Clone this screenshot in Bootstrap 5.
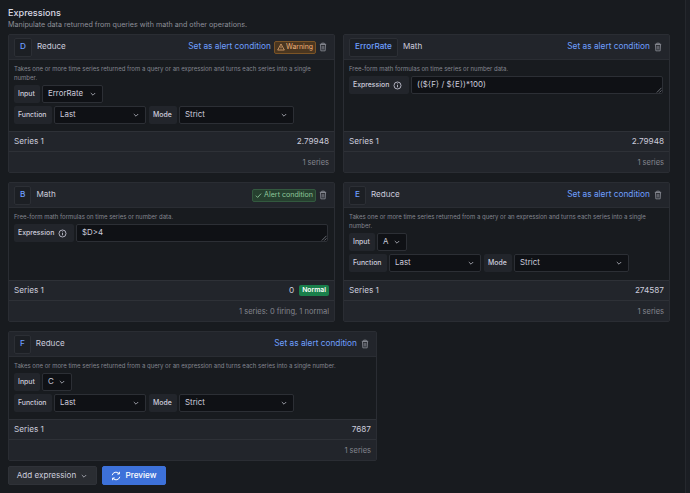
<!DOCTYPE html>
<html lang="en">
<head>
<meta charset="utf-8">
<title>Expressions</title>
<link href="https://cdn.jsdelivr.net/npm/bootstrap@5.3.0/dist/css/bootstrap.min.css" rel="stylesheet">
<style>
html,body{height:100%;overflow:hidden}
body{background:#181b1f;color:#ccccdc;font-family:Inter,"Noto Sans",sans-serif;font-size:8px;line-height:1.2;-webkit-font-smoothing:antialiased}
.shell{height:493px}
.pane{width:685px;padding:7px 0 0 8px}
.rail{width:5px;border-left:1px solid #25282d;background:#1b1e23}
.ttl{font-size:9.1px;font-weight:500;color:#d8d9e4;line-height:12px;margin:0}
.subttl{font-size:7.15px;color:#8e9099;line-height:9px;margin:1px 0 5px}
.grid-exp{display:flex;flex-wrap:wrap;column-gap:8px;row-gap:9px}
.ex{display:flex;flex-direction:column;background:#181b1f;border:1px solid #2a2d33;border-radius:2px}
.w-a{width:327px}.w-b{width:327px}.w-c{width:369px}
.h-a{height:139px}.h-b{height:140px}.h-c{height:130px}
.ex-head{height:25px;flex:none;background:#22252b;border-bottom:1px solid #2a2d33;padding:0 7px 0 5px}
.refid{height:19px;min-width:16px;padding:0 5px;border:1px solid #2c2f35;background:#1c1f24;color:#6e9fff;font-weight:500;font-size:8.2px;border-radius:2px}
.kind{font-size:8.1px;color:#ccccdc;margin-left:5px}
.setlink{font-size:8.3px;color:#6e9fff;white-space:nowrap}
.tag{height:13px;padding:0 2px;border-radius:2px;font-size:6.9px;white-space:nowrap;margin-left:3px;margin-right:3px;gap:1px}
.tag-warn{background:#4a3620;border:1px solid #7b5426;color:#f0b27a}
.tag-ok{background:#26402f;border:1px solid #33593f;color:#8fc79c;font-size:7.1px;gap:2px}
.ex-body{flex:1 1 auto;padding:4px 5px 0 5px;min-height:0}
.hint{font-size:6px;line-height:9px;color:#84868f;margin:0 0 3px}
.frow{display:flex;gap:2px;margin-bottom:3px;height:18px}
.flabel{background:#22252b;font-size:6.9px;font-weight:500;color:#ccccdc;padding:0 4px;height:18px;border-radius:2px;white-space:nowrap}
.l-in{width:26px}.l-fn{width:38px}.l-mo{width:28px;margin-left:1px}.l-ex{width:60px}
.fselect{background:#0f1115;border:1px solid #2c2f35;border-radius:2px;font-size:7.9px;color:#ccccdc;height:18px;padding:0 5px}
.s-err{width:61px}.s-one{width:30px}.s-fn{width:92px}.s-mode{width:115px}
.farea{position:relative;flex:1 1 auto;background:#0f1115;border:1px solid #2c2f35;border-radius:2px;height:18px;padding:0 5px;font-size:7.9px;color:#ccccdc;margin-right:1px}
.grip{position:absolute;right:0;bottom:0}
.ex-row{height:20px;flex:none;background:#22252b;border-top:1px solid #2e3137;padding:0 5px;font-size:8.2px;color:#ccccdc}
.ex-foot{height:21px;flex:none;background:#22252b;border-top:1px solid #2e3137;padding:1px 5px 0;font-size:7.5px;color:#84868f}
.state{background:#1a7f4b;color:#fff;font-size:6.8px;font-weight:600;padding:0 3px;height:11px;border-radius:2px;margin-left:5px}
.actions{margin-top:5px}
.btn-add{height:19px;width:89px;background:#2a2d32;border:1px solid #2f3238;border-radius:2px;color:#ccccdc;font-size:8.1px;padding:0}
.btn-add:hover,.btn-run:hover{color:#fff}
.btn-run{height:19px;width:64px;background:#3d71d9;border:1px solid #3d71d9;border-radius:2px;color:#fff;font-size:8.2px;font-weight:500;padding:0;margin-left:5px}
.ico{flex:none}
</style>
</head>
<body>
<svg width="0" height="0" class="position-absolute">
<defs>
<symbol id="trash" viewBox="0 0 10 12"><path d="M1 2.6h8M3.4 2.4V1.2h3.2v1.2M1.8 3l.5 7.8h5.4L8.2 3zM4 4.6v4.6M6 4.6v4.6" fill="none" stroke="#8e9099" stroke-width="1"/></symbol>
<symbol id="chev" viewBox="0 0 8 8"><path d="M1.8 3l2.2 2.2L6.2 3" fill="none" stroke="#a5a7b0" stroke-width=".9"/></symbol>
<symbol id="info" viewBox="0 0 10 10"><circle cx="5" cy="5" r="3.9" fill="none" stroke="#ccccdc" stroke-width=".9"/><path d="M5 4.4v2.6M5 2.7v.9" stroke="#ccccdc" stroke-width=".9"/></symbol>
<symbol id="grip" viewBox="0 0 6 6"><path d="M5.5.8L.8 5.5M5.5 3.4L3.4 5.5" stroke="#8e9099" stroke-width=".7"/></symbol>
</defs>
</svg>
<div class="shell d-flex">
<div class="pane">
<h2 class="ttl">Expressions</h2>
<p class="subttl">Manipulate data returned from queries with math and other operations.</p>
<div class="grid-exp">

<section class="ex w-a h-a">
<header class="ex-head d-flex align-items-center">
<span class="refid d-flex align-items-center justify-content-center">D</span><span class="kind">Reduce</span>
<span class="setlink ms-auto">Set as alert condition</span>
<span class="tag tag-warn d-flex align-items-center"><svg class="ico" width="8" height="8" viewBox="0 0 10 10"><path d="M5 1.2L9.2 8.8H.8zM5 4v2.4M5 7.2v.6" fill="none" stroke="#f0b27a" stroke-width=".9"/></svg>Warning</span>
<svg class="ico" width="8" height="10"><use href="#trash"/></svg>
</header>
<div class="ex-body">
<p class="hint">Takes one or more time series returned from a query or an expression and turns each series into a single number.</p>
<div class="frow"><span class="flabel l-in d-flex align-items-center">Input</span><span class="fselect s-err d-flex align-items-center justify-content-between">ErrorRate<svg class="ico" width="8" height="8"><use href="#chev"/></svg></span></div>
<div class="frow"><span class="flabel l-fn d-flex align-items-center">Function</span><span class="fselect s-fn d-flex align-items-center justify-content-between">Last<svg class="ico" width="8" height="8"><use href="#chev"/></svg></span><span class="flabel l-mo d-flex align-items-center">Mode</span><span class="fselect s-mode d-flex align-items-center justify-content-between">Strict<svg class="ico" width="8" height="8"><use href="#chev"/></svg></span></div>
</div>
<div class="ex-row d-flex align-items-center justify-content-between"><span>Series 1</span><span>2.79948</span></div>
<div class="ex-foot d-flex align-items-center justify-content-end">1 series</div>
</section>

<section class="ex w-b h-a">
<header class="ex-head d-flex align-items-center">
<span class="refid d-flex align-items-center justify-content-center">ErrorRate</span><span class="kind">Math</span>
<span class="setlink ms-auto me-1">Set as alert condition</span>
<svg class="ico" width="8" height="10"><use href="#trash"/></svg>
</header>
<div class="ex-body">
<p class="hint">Free-form math formulas on time series or number data.</p>
<div class="frow"><span class="flabel l-ex d-flex align-items-center gap-1">Expression<svg class="ico" width="9" height="9"><use href="#info"/></svg></span><div class="farea d-flex align-items-center">((${F} / ${E})*100)<svg class="grip" width="6" height="6"><use href="#grip"/></svg></div></div>
</div>
<div class="ex-row d-flex align-items-center justify-content-between"><span>Series 1</span><span>2.79948</span></div>
<div class="ex-foot d-flex align-items-center justify-content-end">1 series</div>
</section>

<section class="ex w-a h-b">
<header class="ex-head d-flex align-items-center">
<span class="refid d-flex align-items-center justify-content-center">B</span><span class="kind">Math</span>
<span class="tag tag-ok ms-auto d-flex align-items-center"><svg class="ico" width="7" height="7" viewBox="0 0 8 8"><path d="M1 4.2l2 2 4-4.4" fill="none" stroke="#8fc79c" stroke-width="1"/></svg>Alert condition</span>
<svg class="ico" width="8" height="10"><use href="#trash"/></svg>
</header>
<div class="ex-body">
<p class="hint">Free-form math formulas on time series or number data.</p>
<div class="frow"><span class="flabel l-ex d-flex align-items-center gap-1">Expression<svg class="ico" width="9" height="9"><use href="#info"/></svg></span><div class="farea d-flex align-items-center">$D&gt;4<svg class="grip" width="6" height="6"><use href="#grip"/></svg></div></div>
</div>
<div class="ex-row d-flex align-items-center justify-content-between"><span>Series 1</span><span class="d-flex align-items-center">0<span class="state d-flex align-items-center">Normal</span></span></div>
<div class="ex-foot d-flex align-items-center justify-content-end">1 series: 0 firing, 1 normal</div>
</section>

<section class="ex w-b h-b">
<header class="ex-head d-flex align-items-center">
<span class="refid d-flex align-items-center justify-content-center">E</span><span class="kind">Reduce</span>
<span class="setlink ms-auto me-1">Set as alert condition</span>
<svg class="ico" width="8" height="10"><use href="#trash"/></svg>
</header>
<div class="ex-body">
<p class="hint">Takes one or more time series returned from a query or an expression and turns each series into a single number.</p>
<div class="frow"><span class="flabel l-in d-flex align-items-center">Input</span><span class="fselect s-one d-flex align-items-center justify-content-between">A<svg class="ico" width="8" height="8"><use href="#chev"/></svg></span></div>
<div class="frow"><span class="flabel l-fn d-flex align-items-center">Function</span><span class="fselect s-fn d-flex align-items-center justify-content-between">Last<svg class="ico" width="8" height="8"><use href="#chev"/></svg></span><span class="flabel l-mo d-flex align-items-center">Mode</span><span class="fselect s-mode d-flex align-items-center justify-content-between">Strict<svg class="ico" width="8" height="8"><use href="#chev"/></svg></span></div>
</div>
<div class="ex-row d-flex align-items-center justify-content-between"><span>Series 1</span><span>274587</span></div>
<div class="ex-foot d-flex align-items-center justify-content-end">1 series</div>
</section>

<section class="ex w-c h-c">
<header class="ex-head d-flex align-items-center">
<span class="refid d-flex align-items-center justify-content-center">F</span><span class="kind">Reduce</span>
<span class="setlink ms-auto me-1">Set as alert condition</span>
<svg class="ico" width="8" height="10"><use href="#trash"/></svg>
</header>
<div class="ex-body">
<p class="hint">Takes one or more time series returned from a query or an expression and turns each series into a single number.</p>
<div class="frow"><span class="flabel l-in d-flex align-items-center">Input</span><span class="fselect s-one d-flex align-items-center justify-content-between">C<svg class="ico" width="8" height="8"><use href="#chev"/></svg></span></div>
<div class="frow"><span class="flabel l-fn d-flex align-items-center">Function</span><span class="fselect s-fn d-flex align-items-center justify-content-between">Last<svg class="ico" width="8" height="8"><use href="#chev"/></svg></span><span class="flabel l-mo d-flex align-items-center">Mode</span><span class="fselect s-mode d-flex align-items-center justify-content-between">Strict<svg class="ico" width="8" height="8"><use href="#chev"/></svg></span></div>
</div>
<div class="ex-row d-flex align-items-center justify-content-between"><span>Series 1</span><span>7687</span></div>
<div class="ex-foot d-flex align-items-center justify-content-end">1 series</div>
</section>

</div>
<div class="actions d-flex">
<button class="btn btn-add d-flex align-items-center justify-content-center gap-1" type="button">Add expression<svg class="ico" width="8" height="8"><use href="#chev"/></svg></button>
<button class="btn btn-run d-flex align-items-center justify-content-center gap-1" type="button"><svg class="ico" width="10" height="10" viewBox="0 0 10 10"><path d="M1.2 4.2A3.9 3.9 0 0 1 8 2.6M8.8 5.8A3.9 3.9 0 0 1 2 7.4M8.4.8v2.2H6.2M1.6 9.2V7h2.2" fill="none" stroke="#fff" stroke-width="1"/></svg>Preview</button>
</div>
</div>
<div class="rail"></div>
</div>
</body>
</html>
